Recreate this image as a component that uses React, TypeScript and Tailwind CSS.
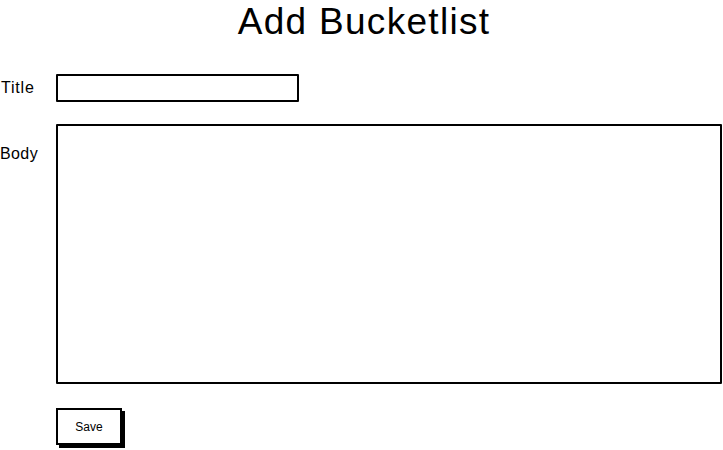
import React from 'react'

export default function App() {
  return (
    <div className="w-[723px] h-[450px] bg-white text-black font-['Liberation_Sans',Arial,sans-serif] overflow-hidden">
      {/* Heading */}
      <h1 className="text-center text-[37px] leading-[40px] tracking-[1.3px] pt-[2px] pl-[5px]">Add Bucketlist</h1>

      {/* Title row */}
      <div className="flex items-center mt-[32px]">
        <label className="w-[56px] pl-[1px] text-[16px] leading-[20px] tracking-[0.8px]">Title</label>
        <div className="w-[243px] h-[28px] border-2 border-black rounded-[1px]" />
      </div>

      {/* Body row */}
      <div className="flex mt-[22px]">
        <label className="w-[56px] text-[16px] leading-[20px] tracking-[0.4px] pt-[20px]">Body</label>
        <div className="w-[666px] h-[260px] border-2 border-black rounded-[1px]" />
      </div>

      {/* Save button */}
      <div className="pl-[56px] mt-[24px]">
        <button className="w-[66px] h-[37px] border-2 border-black bg-white text-[12px] shadow-[3px_3px_0_#000]">
          Save
        </button>
      </div>
    </div>
  )
}
